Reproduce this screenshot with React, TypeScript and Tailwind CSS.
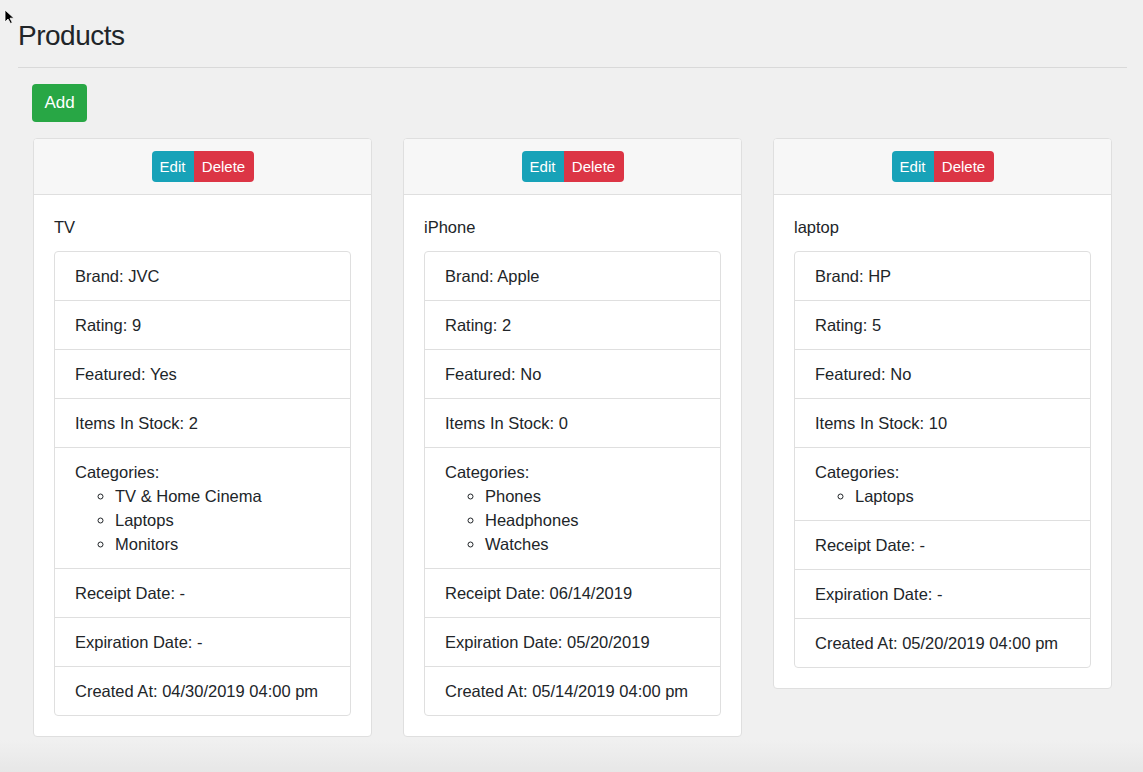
import React from "react";

type Product = {
  name: string;
  brand: string;
  rating: number;
  featured: string;
  stock: number;
  categories: string[];
  receipt: string;
  expiration: string;
  created: string;
};

const products: Product[] = [
  {
    name: "TV",
    brand: "JVC",
    rating: 9,
    featured: "Yes",
    stock: 2,
    categories: ["TV & Home Cinema", "Laptops", "Monitors"],
    receipt: "-",
    expiration: "-",
    created: "04/30/2019 04:00 pm",
  },
  {
    name: "iPhone",
    brand: "Apple",
    rating: 2,
    featured: "No",
    stock: 0,
    categories: ["Phones", "Headphones", "Watches"],
    receipt: "06/14/2019",
    expiration: "05/20/2019",
    created: "05/14/2019 04:00 pm",
  },
  {
    name: "laptop",
    brand: "HP",
    rating: 5,
    featured: "No",
    stock: 10,
    categories: ["Laptops"],
    receipt: "-",
    expiration: "-",
    created: "05/20/2019 04:00 pm",
  },
];

const Item = ({ children }: { children: React.ReactNode }) => (
  <li className="px-5 py-3 leading-6 border-b border-[#dfdfdf] last:border-b-0">{children}</li>
);

const ProductCard = ({ p }: { p: Product }) => {
  return (
    <div className="bg-white border border-[#dfdfdf] rounded overflow-hidden">
      <div className="flex justify-center bg-[#f7f7f7] border-b border-[#dfdfdf] px-5 py-3">
        <div className="flex text-[15px] text-white">
          <button className="h-[31px] w-[42px] bg-[#17a2b8] rounded-l leading-[21px]">Edit</button>
          <button className="h-[31px] w-[60px] bg-[#dc3545] rounded-r leading-[21px]">Delete</button>
        </div>
      </div>
      <div className="p-5">
        <p className="leading-6 mb-3">{p.name}</p>
        <ul className="border border-[#dfdfdf] rounded">
          <Item>Brand: {p.brand}</Item>
          <Item>Rating: {p.rating}</Item>
          <Item>Featured: {p.featured}</Item>
          <Item>Items In Stock: {p.stock}</Item>
          <Item>
            <div>Categories:</div>
            <ul className="list-[circle] pl-10">
              {p.categories.map((c) => (
                <li key={c}>{c}</li>
              ))}
            </ul>
          </Item>
          <Item>Receipt Date: {p.receipt}</Item>
          <Item>Expiration Date: {p.expiration}</Item>
          <Item>Created At: {p.created}</Item>
        </ul>
      </div>
    </div>
  );
};

const App = () => {
  return (
    <div className="relative min-h-[772px] bg-[linear-gradient(to_bottom,#f0f0f0_740px,#e7e7e7_772px)] pl-[18px] pr-[16px] pt-[19px] font-['Liberation_Sans',Arial,sans-serif] text-[16.5px] text-[#212529]">
      <svg className="absolute left-[4px] top-[9px]" width="11" height="15" viewBox="0 0 11 15">
        <path d="M1 1 L1 13 L4 10 L6.5 14.5 L8.3 13.6 L6 9.2 L10 9.2 Z" fill="#000" stroke="#fff" strokeWidth="0.8" />
      </svg>

      <h1 className="text-[28px] leading-[34px] tracking-[-0.5px] font-normal">Products</h1>
      <hr className="mt-[14px] border-t border-[#d9d9d9]" />

      <div className="pl-[14px] pr-[15px] pt-4 pb-9">
        <button className="h-[38px] w-[55px] rounded bg-[#28a745] text-white text-[17px]">Add</button>

        <div className="mt-4 ml-px grid grid-cols-3 gap-[31px] items-start">
          {products.map((p) => (
            <ProductCard key={p.name} p={p} />
          ))}
        </div>
      </div>
    </div>
  );
};

export default App;
